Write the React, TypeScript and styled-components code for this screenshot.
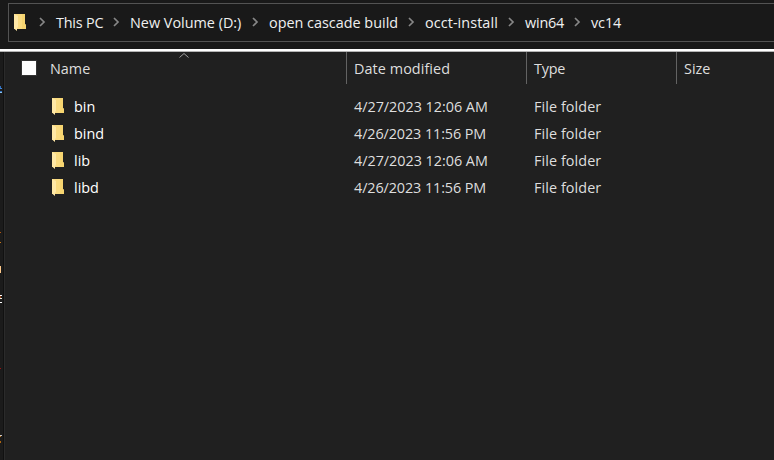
import { FC } from 'react'
import { createGlobalStyle, styled } from 'styled-components'

const GlobalStyle = createGlobalStyle`
  * {
    box-sizing: border-box;
  }
  body {
    margin: 0;
    background: #191919;
    font-family: 'Open Sans', 'Noto Sans', sans-serif;
    font-size: 14.4px;
    overflow: hidden;
  }
`

const Window = styled.div`
  display: flex;
  flex-direction: column;
  width: 774px;
  height: 460px;
  overflow: hidden;
`

const AddressArea = styled.header`
  height: 52px;
  padding: 3px 0 0 8px;
  border-bottom: 1px solid #b4b4b4;
  box-shadow: inset 0 -2px 0 #ffffff;
`

const AddressBar = styled.nav`
  display: flex;
  align-items: center;
  width: 780px;
  height: 39px;
  padding-left: 5px;
  border: 1px solid #535353;
`

const Crumb = styled.div<{ $width: number }>`
  display: flex;
  align-items: center;
  flex: none;
  width: ${({ $width }) => $width}px;
`

const Label = styled.span<{ $spacing?: number }>`
  letter-spacing: ${({ $spacing = 0 }) => $spacing}px;
  line-height: 20px;
  white-space: pre;
`

const CrumbLabel = styled(Label)`
  margin-left: 10px;
  color: #f0f0f0;
`

const ChevronIcon = styled.svg`
  flex: none;
  margin-bottom: 2px;
`

const Body = styled.div`
  display: flex;
  flex: 1;
`

const EditorEdge = styled.div`
  width: 3px;
  background: #1b1b1b;
  overflow: hidden;
`

const Fragment = styled.div<{ $gap: number; $width: number; $height: number; $color: string }>`
  width: ${({ $width }) => $width}px;
  height: ${({ $height }) => $height}px;
  margin-top: ${({ $gap }) => $gap}px;
  background: ${({ $color }) => $color};
`

const FileList = styled.main`
  flex: 1;
  background: #202020;
  border-left: 1px solid #111111;
  box-shadow: inset 1px 0 0 #2b2b2b;
`

const HeaderRow = styled.div`
  display: flex;
  height: 32px;
  color: #dedede;
`

const HeaderCell = styled.div<{ $width: number; $first?: boolean }>`
  position: relative;
  display: flex;
  align-items: center;
  width: ${({ $width }) => $width}px;
  padding: 1px 0 0 ${({ $first }) => ($first ? 17 : 7)}px;
  border-right: 1px solid #636363;

  &:last-child {
    border-right: 0;
  }
`

const Checkbox = styled.span`
  width: 16px;
  height: 16px;
  margin: 0 13px 2px 0;
  background: #ffffff;
  border: 1px solid #333333;
`

const SortArrow = styled.svg`
  position: absolute;
  top: 0;
  left: 174px;
`

const Rows = styled.div`
  padding-top: 9px;
`

const Row = styled.div`
  display: flex;
  height: 27px;
  color: #dedede;
`

const NameCell = styled.div`
  display: flex;
  align-items: center;
  width: 350px;
  padding-left: 48px;
  color: #ffffff;

  svg {
    margin-right: 10px;
    margin-bottom: 1px;
  }
`

const Cell = styled.div<{ $width: number }>`
  display: flex;
  align-items: center;
  width: ${({ $width }) => $width}px;
`

const FolderIcon: FC = () => (
  <svg width="12" height="17" viewBox="0 0 12 17">
    <path d="M0 0H11V10L12 11V15H0Z" fill="#fadb80" />
    <path d="M8 0H11V10L12 11V15H8Z" fill="#f6d470" />
    <path d="M0 0L4 2V13L3 14V17L0 14.5Z" fill="#ffe8a6" />
  </svg>
)

const Chevron: FC = () => (
  <ChevronIcon width="7" height="10" viewBox="0 0 7 10" fill="none">
    <path d="M1 1L5 5L1 9" stroke="#878787" strokeWidth="1.7" />
  </ChevronIcon>
)

const crumbs = [
  { label: 'This PC', width: 74, spacing: -0.2 },
  { label: 'New Volume (D:)', width: 139, spacing: 0 },
  { label: 'open cascade build', width: 156, spacing: 0 },
  { label: 'occt-install', width: 100, spacing: 0.08 },
  { label: 'win64', width: 66, spacing: -0.2 },
  { label: 'vc14', width: 60, spacing: -0.1 },
]

const folders = [
  { name: 'bin', modified: '4/27/2023 12:06 AM' },
  { name: 'bind', modified: '4/26/2023 11:56 PM' },
  { name: 'lib', modified: '4/27/2023 12:06 AM' },
  { name: 'libd', modified: '4/26/2023 11:56 PM' },
]

// bits of the window behind that show at the left edge
const fragments = [
  { gap: 34, width: 1, height: 2, color: '#2f6fc0' },
  { gap: 0, width: 2, height: 1, color: '#3f86d8' },
  { gap: 2, width: 2, height: 1, color: '#2f6fc0' },
  { gap: 0, width: 2, height: 1, color: '#8fc4ea' },
  { gap: 139, width: 1, height: 1, color: '#b0560f' },
  { gap: 9, width: 1, height: 1, color: '#c77717' },
  { gap: 23, width: 1, height: 7, color: '#ffc98a' },
  { gap: 22, width: 2, height: 1, color: '#ffffff' },
  { gap: 0, width: 1, height: 2, color: '#9a3d10' },
  { gap: 0, width: 2, height: 1, color: '#e8e8d8' },
  { gap: 3, width: 2, height: 1, color: '#ffffff' },
  { gap: 65, width: 1, height: 1, color: '#9a1313' },
  { gap: 66, width: 2, height: 1, color: '#c9c9c9' },
  { gap: 0, width: 1, height: 1, color: '#c77717' },
  { gap: 4, width: 1, height: 2, color: '#b0660f' },
]

const App: FC = () => (
  <>
    <GlobalStyle />
    <Window>
      <AddressArea>
        <AddressBar>
          <Crumb $width={25}>
            <FolderIcon />
          </Crumb>
          {crumbs.map(({ label, width, spacing }) => (
            <Crumb key={label} $width={width}>
              <Chevron />
              <CrumbLabel $spacing={spacing}>{label}</CrumbLabel>
            </Crumb>
          ))}
        </AddressBar>
      </AddressArea>
      <Body>
        <EditorEdge>
          {fragments.map((fragment, index) => (
            <Fragment
              key={index}
              $gap={fragment.gap}
              $width={fragment.width}
              $height={fragment.height}
              $color={fragment.color}
            />
          ))}
        </EditorEdge>
        <FileList>
          <HeaderRow>
            <HeaderCell $width={343} $first>
              <Checkbox />
              <Label>Name</Label>
              <SortArrow width="12" height="7" viewBox="0 0 12 7" fill="none">
                <path d="M1.5 5.5L6 1.5L10.5 5.5" stroke="#a0a0a0" />
              </SortArrow>
            </HeaderCell>
            <HeaderCell $width={180}>
              <Label $spacing={0.07}>Date modified</Label>
            </HeaderCell>
            <HeaderCell $width={150}>
              <Label $spacing={-0.2}>Type</Label>
            </HeaderCell>
            <HeaderCell $width={97}>
              <Label>Size</Label>
            </HeaderCell>
          </HeaderRow>
          <Rows>
            {folders.map(({ name, modified }) => (
              <Row key={name}>
                <NameCell>
                  <FolderIcon />
                  <Label>{name}</Label>
                </NameCell>
                <Cell $width={180}>
                  <Label $spacing={modified.endsWith('PM') ? -0.1 : -0.03}>{modified}</Label>
                </Cell>
                <Cell $width={150}>
                  <Label $spacing={0.08}>File folder</Label>
                </Cell>
              </Row>
            ))}
          </Rows>
        </FileList>
      </Body>
    </Window>
  </>
)

export default App
